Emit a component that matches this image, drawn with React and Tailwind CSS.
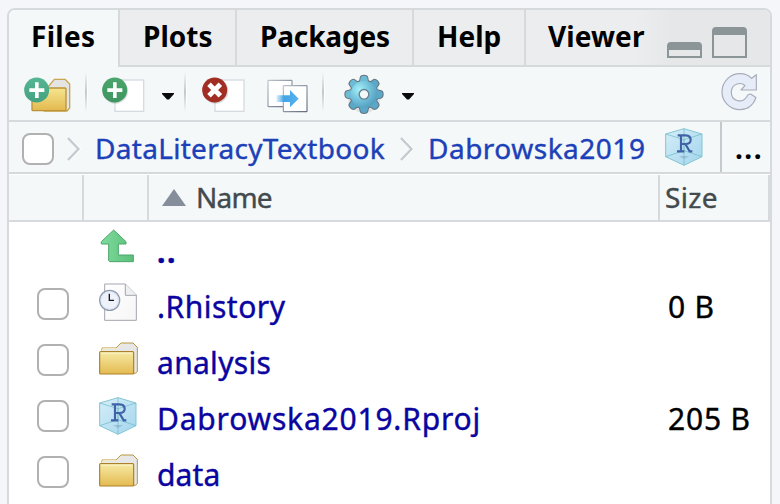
import React from "react";

function PlusBadge({ from, to, id }) {
  return (
    <g>
      <defs>
        <linearGradient id={id} x1="0" y1="0" x2="0" y2="1">
          <stop offset="0" stopColor={from} />
          <stop offset="1" stopColor={to} />
        </linearGradient>
      </defs>
      <circle cx="38" cy="39" r="37.5" fill={`url(#${id})`} />
      <path d="M33 16h11v18h17v11H44v18H33V45H16V34h17z" fill="#fff" />
    </g>
  );
}

function NewFolderIcon() {
  return (
    <svg className="h-[36px] w-[48px] shrink-0" viewBox="0 0 144 108">
      <defs>
        <linearGradient id="nf" x1="0" y1="0" x2="0" y2="1">
          <stop offset="0" stopColor="#f5e58f" />
          <stop offset="1" stopColor="#e3b950" />
        </linearGradient>
      </defs>
      <path d="M72 30L91 7h32l14 14v72l-8 9H60z" fill="#e4e5e3" stroke="#c9a650" strokeWidth="4" strokeLinejoin="round" />
      <rect x="24" y="33" width="102" height="68" rx="3" fill="url(#nf)" stroke="#bd9237" strokeWidth="4" />
      <PlusBadge id="nfp" from="#56b694" to="#45a17f" />
    </svg>
  );
}

function NewFileIcon() {
  return (
    <svg className="h-[36px] w-[44px] shrink-0" viewBox="0 0 132 108">
      <rect x="39" y="9" width="86" height="94" fill="#fff" stroke="#d5dce1" strokeWidth="4" />
      <circle cx="40" cy="42" r="38" fill="#8a9691" opacity=".35" />
      <PlusBadge id="nfi" from="#4ba56c" to="#3f9560" />
    </svg>
  );
}

function DeleteIcon() {
  return (
    <svg className="h-[36px] w-[44px] shrink-0" viewBox="0 0 132 108">
      <rect x="39" y="9" width="87" height="94" fill="#fff" stroke="#d5dce1" strokeWidth="4" />
      <circle cx="41" cy="42" r="38" fill="#8a9691" opacity=".35" />
      <circle cx="38" cy="39" r="37.5" fill="#a22d22" />
      <path d="M21 22L55 56M55 22L21 56" stroke="#fff" strokeWidth="15" />
    </svg>
  );
}

function CopyIcon() {
  return (
    <svg className="h-[34px] w-[42px] shrink-0" viewBox="0 0 126 102">
      <defs>
        <linearGradient id="cpb" x1="0" y1="0" x2="1" y2="1">
          <stop offset="0" stopColor="#bcc3cb" />
          <stop offset="1" stopColor="#626a7e" />
        </linearGradient>
        <linearGradient id="cpa" gradientUnits="userSpaceOnUse" x1="28" y1="0" x2="95" y2="0">
          <stop offset="0" stopColor="#43a5e8" stopOpacity=".15" />
          <stop offset=".35" stopColor="#43a5e8" />
          <stop offset="1" stopColor="#55b2ee" />
        </linearGradient>
      </defs>
      <rect x="3" y="4" width="72" height="79" rx="2" fill="#fff" stroke="url(#cpb)" strokeWidth="3.5" />
      <rect x="49" y="20" width="71" height="78" rx="2" fill="#fff" stroke="url(#cpb)" strokeWidth="3.5" />
      <path d="M28 49H69V33L95 59 69 85V69H28z" fill="url(#cpa)" />
    </svg>
  );
}

function GearIcon() {
  const teeth = [0, 45, 90, 135, 180, 225, 270, 315];
  return (
    <svg className="h-[42px] w-[42px] shrink-0" viewBox="-63 -61 126 126">
      <defs>
        <radialGradient id="gr" gradientUnits="userSpaceOnUse" cx="-14" cy="-14" r="62">
          <stop offset="0" stopColor="#a4f0fa" />
          <stop offset=".55" stopColor="#6fbdd7" />
          <stop offset="1" stopColor="#4f9abd" />
        </radialGradient>
      </defs>
      <ellipse cx="1" cy="6" rx="50" ry="50" fill="#7d8b96" opacity=".18" />
      <g fill="#65757f">
        <circle r="43" />
        {teeth.map((a) => (
          <path key={a} d="M-20 -36Q-12 -42 -13 -50Q-12 -59 0 -59Q12 -59 13 -50Q12 -42 20 -36Z" transform={`rotate(${a})`} />
        ))}
      </g>
      <g>
        {teeth.map((a) => (
          <path
            key={a}
            d="M-18 -34Q-9 -41 -10 -50Q-9 -56 0 -56Q9 -56 10 -50Q9 -41 18 -34Z"
            transform={`rotate(${a})`}
            fill={a === 0 || a >= 270 ? "#6dbcd5" : "#5aa7c8"}
          />
        ))}
      </g>
      <circle r="40" fill="url(#gr)" />
      <circle r="14.5" fill="#f4f8f9" stroke="#65818f" strokeWidth="4" />
    </svg>
  );
}

function RefreshIcon() {
  return (
    <svg className="h-[40px] w-[38px] shrink-0" viewBox="0 0 114 120">
      <path
        d="M106 8V54H60L72 41C61 29 33 34 31 59C30 87 62 96 77 75C80 66 88 64 95 70L105 77C94 106 75 113 58 113C26 113 3 88 3 60C3 28 28 5 57 5C72 5 82 9 92 19Z"
        fill="#e6edf8" stroke="#a7abba" strokeWidth="3.5" strokeLinejoin="round"
      />
    </svg>
  );
}

function FolderIcon() {
  return (
    <svg className="h-[33px] w-[39px]" viewBox="0 0 117 99">
      <defs>
        <linearGradient id="fo" x1="0" y1="0" x2="0" y2="1">
          <stop offset="0" stopColor="#f6eaa4" />
          <stop offset="1" stopColor="#e4ba51" />
        </linearGradient>
      </defs>
      <path d="M9 30V18H51L66 3H102L115 16V89L109 94H90V30z" fill="#e6e7e6" stroke="#b9963f" strokeWidth="3" strokeLinejoin="round" />
      <path d="M11 28V20H52L67 5" fill="none" stroke="#f6eecb" strokeWidth="3" />
      <rect x="2" y="29" width="102" height="67" rx="3" fill="url(#fo)" stroke="#ab822a" strokeWidth="3.5" />
      <path d="M5 33H101" stroke="#fcf6cf" strokeWidth="3" />
    </svg>
  );
}

function ProjectIcon() {
  return (
    <svg className="h-[38px] w-[38px] shrink-0" viewBox="0 0 114 114">
      <defs>
        <linearGradient id="cu" x1="0" y1="0" x2="1" y2="1">
          <stop offset="0" stopColor="#d5eef8" />
          <stop offset="1" stopColor="#a3d5ee" />
        </linearGradient>
      </defs>
      <path d="M57 2L111 18V86L57 112 2 86V18z" fill="url(#cu)" stroke="#83c5d2" strokeWidth="3" />
      <path d="M2 18L57 35 111 18M57 35V112M57 2V70M2 86L57 68 111 86" fill="none" stroke="#74bdc8" strokeWidth="3" opacity=".75" />
      <path d="M42 84H73L57 93z" fill="#7faabf" opacity=".55" />
      <path d="M38 22H62Q77 23 77 35Q77 48 61 48H50M48 22V70M36 70H58M61 48L74 70H82" fill="none" stroke="#4062a6" strokeWidth="6.5" />
    </svg>
  );
}

function UpIcon() {
  return (
    <svg className="h-[34px] w-[36px]" viewBox="0 0 108 102">
      <defs>
        <linearGradient id="up" x1="0" y1="0" x2="1" y2="0">
          <stop offset="0" stopColor="#7edb9c" />
          <stop offset="1" stopColor="#5bbf7a" />
        </linearGradient>
      </defs>
      <path d="M41 3L78 38V45H55V78H100V98H29L26 95V45H4V38z" fill="url(#up)" stroke="#4da56b" strokeWidth="3" strokeLinejoin="round" />
    </svg>
  );
}

function HistoryIcon() {
  return (
    <svg className="h-[39px] w-[39px]" viewBox="0 0 117 117">
      <defs>
        <linearGradient id="pg" x1="0" y1="0" x2="1" y2="1">
          <stop offset="0" stopColor="#ffffff" />
          <stop offset="1" stopColor="#f6f6f7" />
        </linearGradient>
      </defs>
      <path d="M17 3H79L112 36V112H17z" fill="url(#pg)" stroke="#a4a7ad" strokeWidth="3" />
      <path d="M79 3V37H112" fill="#eef0f1" stroke="#a4a7ad" strokeWidth="3" />
      <circle cx="32" cy="52" r="30" fill="#eef3fb" stroke="#8f9bb0" strokeWidth="4" />
      <circle cx="32" cy="52" r="26" fill="none" stroke="#d5deeb" strokeWidth="2" />
      <path d="M31 32V52H45" fill="none" stroke="#16181c" strokeWidth="4" />
    </svg>
  );
}

function Caret() {
  return (
    <svg className="h-[7px] w-[12px] shrink-0" viewBox="0 0 12 7">
      <path d="M0 0H12V1L7 6.5H5L0 1z" fill="#0b0b0b" />
    </svg>
  );
}

function Chevron() {
  return (
    <svg className="h-[24px] w-[14px] shrink-0" viewBox="0 0 14 24">
      <path d="M2 1L13 12 2 23" fill="none" stroke="#fff" strokeWidth="2" />
      <path d="M1 1L11.5 12 1 23" fill="none" stroke="#c5cad0" strokeWidth="2.4" />
    </svg>
  );
}

function Separator() {
  return (
    <div className="flex h-[40px] w-[3px] shrink-0">
      <div className="w-[2px] bg-linear-to-b from-transparent via-[#c3c8ca] to-transparent" />
      <div className="w-px bg-linear-to-b from-transparent via-white to-transparent" />
    </div>
  );
}

function Checkbox() {
  return <div className="size-8 shrink-0 rounded-[8px] border-2 border-[#b1b1b1] bg-white" />;
}

const tabs = [
  { label: "Files", cls: "w-[111px] pl-[22px] border-r-2 tracking-[0.3px]", active: true },
  { label: "Plots", cls: "w-[117px] pl-[23px] border-r-2 tracking-[0px]" },
  { label: "Packages", cls: "w-[177px] pl-[23px] border-r-2 tracking-[-0.15px]" },
  { label: "Help", cls: "w-[112px] pl-[23px] border-r-2 tracking-[0px]" },
  { label: "Viewer", cls: "w-[244px] pl-[22px] tracking-[0.1px] bg-linear-to-r from-[#ecedef] from-45% to-[#e5e7e8] to-60%" },
];

const rows = [
  { name: "..", icon: <UpIcon />, iconPad: "pl-[9px] pb-[9px]", parent: true, cls: "tracking-[1.5px] pt-[3px] font-bold" },
  { name: ".Rhistory", icon: <HistoryIcon />, iconPad: "pl-[8px] pb-[8px]", size: "0 B", cls: "tracking-[0.5px]" },
  { name: "analysis", icon: <FolderIcon />, iconPad: "pl-[8px] pb-[7px]", cls: "tracking-[0.3px]" },
  { name: "Dabrowska2019.Rproj", icon: <ProjectIcon />, iconPad: "pl-[8px] pb-[4px]", size: "205 B", cls: "tracking-[0.8px]" },
  { name: "data", icon: <FolderIcon />, iconPad: "pl-[8px] pb-[7px]", cls: "tracking-[0.1px]" },
];

export default function App() {
  return (
    <div className="h-[504px] w-[780px] overflow-hidden bg-[#f5f6f9] pt-[8px] pl-[7px] font-['Noto_Sans','Open_Sans',sans-serif] text-[28px] whitespace-nowrap">
      <div className="flex h-[520px] w-[765px] flex-col overflow-hidden rounded-t-[8px] border-2 border-[#d6dadc] bg-white">
        <div className="flex h-[57px] shrink-0 bg-[#f4f8f9]">
          {tabs.map((t) => (
            <div
              key={t.label}
              className={`flex shrink-0 items-center border-[#d6dadc] font-bold text-black ${t.cls} ${t.active ? "bg-[#f4f8f9] pb-[6px]" : "border-b-2 bg-[#ecedef] pb-[4px]"}`}
            >
              <span>{t.label}</span>
              {t.label === "Viewer" && (
                <div className="mt-[29px] ml-auto flex items-end gap-[10px] pr-[23px]">
                  <div className="h-[16px] w-[35px] rounded-t-[4px] border-2 border-t-[8px] border-[#8b9496]" />
                  <div className="mt-[-15px] h-[31px] w-[35px] rounded-t-[4px] border-2 border-t-[8px] border-[#8b9496]" />
                </div>
              )}
            </div>
          ))}
        </div>

        <div className="flex h-[55px] shrink-0 items-center border-b-2 border-[#d6dadc] bg-[#f4f8f9] pl-[15px]">
          <div className="mt-[2px]"><NewFolderIcon /></div>
          <div className="mb-[4px] ml-[13px]"><Separator /></div>
          <div className="mt-[2px] ml-[14px]"><NewFileIcon /></div>
          <div className="mt-[6px] ml-[16px] flex"><Caret /></div>
          <div className="mb-[4px] ml-[10px]"><Separator /></div>
          <div className="mt-[2px] ml-[15px]"><DeleteIcon /></div>
          <div className="mt-[4px] ml-[21px]"><CopyIcon /></div>
          <div className="mb-[4px] ml-[13px]"><Separator /></div>
          <div className="mt-[2px] ml-[18px]"><GearIcon /></div>
          <div className="mt-[6px] ml-[17px] flex"><Caret /></div>
          <div className="mr-[11px] mb-[3px] ml-auto"><RefreshIcon /></div>
        </div>

        <div className="flex h-[52px] shrink-0 items-center border-b-2 border-[#d6dadc] bg-[#f4f8f9] pl-[13px] text-[#1c40b8]">
          <div className="mt-[3px]"><Checkbox /></div>
          <div className="mt-[4px] ml-[13px]"><Chevron /></div>
          <div className="w-[319px] shrink-0 pt-[2px] pl-[14px] tracking-[0.3px] [-webkit-text-stroke:0.4px]">DataLiteracyTextbook</div>
          <div className="mt-[4px]"><Chevron /></div>
          <div className="w-[231px] shrink-0 pt-[2px] pl-[14px] tracking-[0.5px] [-webkit-text-stroke:0.4px]">Dabrowska2019</div>
          <div className="mb-px ml-[20px]"><ProjectIcon /></div>
          <div className="ml-auto flex h-full w-[50px] items-center border-l-2 border-[#c3c9cd] pt-[2px] pl-[13px] font-bold tracking-[1.5px] text-black">...</div>
        </div>

        <div className="flex h-[48px] shrink-0 border-t border-b-2 border-t-white border-b-[#d6dadc] bg-[#f4f8f9] text-[#424a4d] [-webkit-text-stroke:0.4px]">
          <div className="w-[75px] border-r-2 border-[#d6dadc]" />
          <div className="w-[65px] border-r-2 border-[#d6dadc]" />
          <div className="flex flex-1 items-center border-r-2 border-[#d6dadc] pb-px pl-[13px]">
            <svg className="h-[17px] w-[24px]" viewBox="0 0 24 17"><path d="M12 0L24 17H0z" fill="#868d9b" /></svg>
            <span className="pl-[10px] tracking-[-0.8px]">Name</span>
          </div>
          <div className="flex w-[110px] items-center border-r-2 border-[#d6dadc] pb-px pl-[5px] tracking-[0.3px]">Size</div>
        </div>

        <div className="text-[30px] text-[#0a04a0] [-webkit-text-stroke:0.4px]">
          {rows.map((r) => (
            <div key={r.name} className="flex h-[56px] items-center">
              <div className="w-[82px] pb-[4px] pl-[28px]">{!r.parent && <Checkbox />}</div>
              <div className={`w-[66px] ${r.iconPad}`}>{r.icon}</div>
              <div className={`flex-1 ${r.cls}`}>{r.name}</div>
              <div className="w-[102px] tracking-[0.8px] text-black">{r.size}</div>
            </div>
          ))}
        </div>
      </div>
    </div>
  );
}
